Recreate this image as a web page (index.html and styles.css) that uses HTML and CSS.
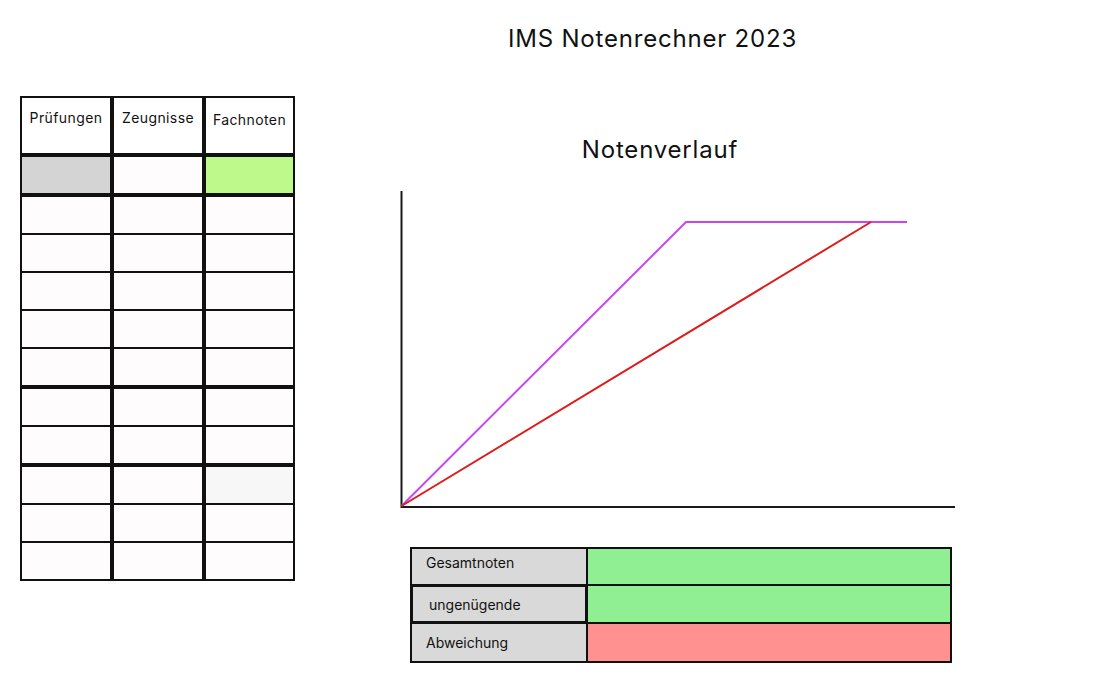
FILE: index.html
```html
<!DOCTYPE html>
<html lang="de">
<head>
<meta charset="utf-8">
<title>IMS Notenrechner 2023</title>
<link rel="stylesheet" href="styles.css">
</head>
<body>
<header class="top">
  <h1 class="title">IMS Notenrechner 2023</h1>
</header>
<div class="content">
  <aside class="grades">
    <div class="grades-row grades-row--head">
      <div class="cell cell--head">Prüfungen</div>
      <div class="cell cell--head">Zeugnisse</div>
      <div class="cell cell--head cell--low">Fachnoten</div>
    </div>
    <div class="grades-row grades-row--break">
      <div class="cell cell--gray"></div>
      <div class="cell"></div>
      <div class="cell cell--green"></div>
    </div>
    <div class="grades-row grades-row--break">
      <div class="cell"></div><div class="cell"></div><div class="cell"></div>
    </div>
    <div class="grades-row">
      <div class="cell"></div><div class="cell"></div><div class="cell"></div>
    </div>
    <div class="grades-row">
      <div class="cell"></div><div class="cell"></div><div class="cell"></div>
    </div>
    <div class="grades-row">
      <div class="cell"></div><div class="cell"></div><div class="cell"></div>
    </div>
    <div class="grades-row">
      <div class="cell"></div><div class="cell"></div><div class="cell"></div>
    </div>
    <div class="grades-row grades-row--break">
      <div class="cell"></div><div class="cell"></div><div class="cell"></div>
    </div>
    <div class="grades-row">
      <div class="cell"></div><div class="cell"></div><div class="cell"></div>
    </div>
    <div class="grades-row grades-row--break">
      <div class="cell"></div><div class="cell"></div><div class="cell cell--light"></div>
    </div>
    <div class="grades-row">
      <div class="cell"></div><div class="cell"></div><div class="cell"></div>
    </div>
    <div class="grades-row">
      <div class="cell"></div><div class="cell"></div><div class="cell"></div>
    </div>
  </aside>
  <main class="overview">
    <h2 class="subtitle">Notenverlauf</h2>
    <svg class="chart" width="560" height="318" viewBox="0 0 560 318" aria-label="Notenverlauf">
      <line x1="1.5" y1="0" x2="1.5" y2="317" stroke="#1a1a1a" stroke-width="2"/>
      <line x1="1" y1="316" x2="555" y2="316" stroke="#1a1a1a" stroke-width="2"/>
      <polyline points="1.5,315 286,31 507,31" fill="none" stroke="#cc44ee" stroke-width="2"/>
      <line x1="1.5" y1="315" x2="471" y2="31" stroke="#dd1c1c" stroke-width="2"/>
    </svg>
    <div class="summary">
      <div class="summary-row summary-row--first">
        <div class="summary-label summary-label--top">Gesamtnoten</div>
        <div class="summary-value summary-value--good"></div>
      </div>
      <div class="summary-row summary-row--mid">
        <div class="summary-label summary-label--outlined">ungenügende</div>
        <div class="summary-value summary-value--good"></div>
      </div>
      <div class="summary-row summary-row--last">
        <div class="summary-label">Abweichung</div>
        <div class="summary-value summary-value--bad"></div>
      </div>
    </div>
  </main>
</div>
</body>
</html>
```
FILE: styles.css
```css
* { box-sizing: border-box; }

body {
  margin: 0;
  background: #ffffff;
  color: #111111;
  font-family: Inter, "Noto Sans", "Liberation Sans", sans-serif;
}

.top {
  padding: 24px 0 0 508px;
}

.title {
  margin: 0;
  font-size: 24px;
  font-weight: 400;
  line-height: 29px;
  letter-spacing: 0.8px;
}

.content {
  display: flex;
  align-items: flex-start;
}

/* left grade table */
.grades {
  margin: 43px 0 0 20px;
  padding: 2px;
  background: #111111;
  display: flex;
  flex-direction: column;
  gap: 2px;
}

.grades-row {
  display: grid;
  grid-template-columns: 88px 88px 87px;
  column-gap: 4px;
  height: 36px;
}

.grades-row--head {
  height: 55px;
}

.grades-row--break {
  margin-top: 2px;
}

.cell {
  background: #fefcfd;
}

.cell--head {
  font-size: 14px;
  line-height: 17px;
  letter-spacing: 0.4px;
  text-align: center;
  padding-top: 11px;
  background: #ffffff;
}

.cell--low {
  padding-top: 13px;
}

.cell--gray { background: #d4d4d4; }
.cell--green { background: #bdf98b; }
.cell--light { background: #f8f7f7; }

/* right side */
.overview {
  margin: 82px 0 0 105px;
  width: 560px;
  display: flex;
  flex-direction: column;
}

.subtitle {
  margin: 0;
  padding-right: 40px;
  font-size: 24px;
  font-weight: 400;
  line-height: 29px;
  letter-spacing: 0.8px;
  text-align: center;
}

.chart {
  display: block;
  margin-top: 27px;
}

.summary {
  margin: 38px 0 0 10px;
  width: 542px;
  border: 2px solid #111111;
  background: #111111;
  display: flex;
  flex-direction: column;
  gap: 2px;
}

.summary-row {
  display: flex;
  gap: 2px;
  height: 35px;
}

.summary-row--mid {
  height: 36px;
}

.summary-row--last {
  height: 37px;
}

.summary-label {
  width: 174px;
  background: #d9d9d9;
  font-size: 14px;
  line-height: 17px;
  padding-left: 14px;
  display: flex;
  align-items: center;
}

.summary-label--top {
  align-items: flex-start;
  padding-top: 5px;
}

.summary-label--outlined {
  padding-left: 17px;
  box-shadow: inset 0 0 0 1px #111111, -2px 0 0 #111111;
}

.summary-value {
  flex: 1;
}

.summary-value--good { background: #91ef93; }
.summary-value--bad { background: #ff9191; }
```
